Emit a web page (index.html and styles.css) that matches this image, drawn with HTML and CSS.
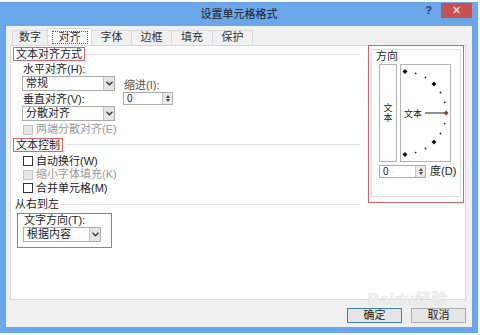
FILE: index.html
```html
<!DOCTYPE html>
<html>
<head>
    <title>设置单元格格式</title>
    <link rel="stylesheet" href="styles.css">
</head>
<body>
    <div class="window">
        <div class="titlebar">
            <div></div>
            <div class="title">设置单元格格式</div>
            <div class="controls">
                <span class="help">?</span>
                <span class="close">×</span>
            </div>
        </div>
        <div class="dialog-body">
            <div class="tabs">
                <div class="tab w36">数字</div>
                <div class="tab w44 active"><span class="focus">对齐</span></div>
                <div class="tab w40">字体</div>
                <div class="tab w40">边框</div>
                <div class="tab w41">填充</div>
                <div class="tab w40">保护</div>
            </div>
            <div class="panel">
                <div class="left">
                    <div class="heading">
                        <span class="mark">文本对齐方式</span>
                        <span class="rule"></span>
                    </div>
                    <div class="align-grid">
                        <div class="col-a">
                            <div class="label">水平对齐(<u>H</u>):</div>
                            <div class="select w93"><span>常规</span><span class="arrow"><svg width="7" height="5" viewBox="0 0 7 5"><path d="M0.5 0.8 L3.5 3.8 L6.5 0.8" fill="none" stroke="#333" stroke-width="1.3"/></svg></span></div>
                            <div class="label gap2">垂直对齐(<u>V</u>):</div>
                            <div class="select w93"><span>分散对齐</span><span class="arrow"><svg width="7" height="5" viewBox="0 0 7 5"><path d="M0.5 0.8 L3.5 3.8 L6.5 0.8" fill="none" stroke="#333" stroke-width="1.3"/></svg></span></div>
                        </div>
                        <div class="col-b">
                            <div class="label muted">缩进(<u>I</u>):</div>
                            <div class="spin w50"><span>0</span><span class="spin-btn"><i class="up"></i><i class="down"></i></span></div>
                        </div>
                    </div>
                    <div class="check disabled justify"><span class="box"></span><span>两端分散对齐(<u>E</u>)</span></div>

                    <div class="heading">
                        <span class="mark">文本控制</span>
                        <span class="rule"></span>
                    </div>
                    <div class="check first"><span class="box"></span><span>自动换行(<u>W</u>)</span></div>
                    <div class="check disabled"><span class="box"></span><span>缩小字体填充(<u>K</u>)</span></div>
                    <div class="check"><span class="box"></span><span>合并单元格(<u>M</u>)</span></div>

                    <div class="heading plain">
                        <span class="group-title">从右到左</span>
                        <span class="rule"></span>
                    </div>
                    <div class="direction">
                        <div class="label">文字方向(<u>T</u>):</div>
                        <div class="select w78"><span>根据内容</span><span class="arrow"><svg width="7" height="5" viewBox="0 0 7 5"><path d="M0.5 0.8 L3.5 3.8 L6.5 0.8" fill="none" stroke="#333" stroke-width="1.3"/></svg></span></div>
                    </div>
                </div>

                <div class="right">
                    <div class="orient">
                        <div class="orient-title">方向</div>
                        <div class="orient-boxes">
                            <div class="vtext"><span>文本</span></div>
                            <div class="dial">
                                <svg width="51" height="98" viewBox="0 0 51 98">
                                    <polygon points="5,5 7.5,7.5 5,10 2.5,7.5" fill="#111"/>
                                    <circle cx="15.6" cy="9.4" r="0.9" fill="#222"/>
                                    <circle cx="25.5" cy="13.5" r="0.9" fill="#222"/>
                                    <polygon points="34,17.5 36.5,20 34,22.5 31.5,20" fill="#111"/>
                                    <circle cx="40.5" cy="28.5" r="0.9" fill="#222"/>
                                    <circle cx="44.6" cy="38.4" r="0.9" fill="#222"/>
                                    <text x="4" y="52.5" font-size="9" font-family="Noto Sans CJK SC, sans-serif" fill="#222">文本</text>
                                    <line x1="25" y1="49" x2="44" y2="49" stroke="#222" stroke-width="1"/>
                                    <polygon points="46,46.5 48.5,49 46,51.5 43.5,49" fill="#b3282d"/>
                                    <circle cx="44.6" cy="59.6" r="0.9" fill="#222"/>
                                    <circle cx="40.5" cy="69.5" r="0.9" fill="#222"/>
                                    <polygon points="34,75.5 36.5,78 34,80.5 31.5,78" fill="#111"/>
                                    <circle cx="25.5" cy="84.5" r="0.9" fill="#222"/>
                                    <circle cx="15.6" cy="88.6" r="0.9" fill="#222"/>
                                    <polygon points="5,88 7.5,90.5 5,93 2.5,90.5" fill="#111"/>
                                </svg>
                            </div>
                        </div>
                        <div class="degree-row">
                            <div class="spin w47"><span>0</span><span class="spin-btn"><i class="up"></i><i class="down"></i></span></div>
                            <span class="degree">度(<u>D</u>)</span>
                        </div>
                    </div>
                </div>
            </div>
            <div class="buttons">
                <div class="btn default">确定</div>
                <div class="btn">取消</div>
            </div>
            <div class="watermark">Baidu经验</div>
        </div>
    </div>
</body>
</html>
```

FILE: styles.css
```css
* { margin: 0; padding: 0; box-sizing: border-box; }
body { background: #f6f8fa; font-family: "Liberation Sans", "Noto Sans CJK SC", sans-serif; font-size: 11px; line-height: 13px; color: #222; }
u { text-decoration: none; }

.window { width: 478px; height: 331px; margin-top: 2px; background: #6ba7e8; padding: 0 6px 6px 6px; }
.titlebar { height: 24px; display: grid; grid-template-columns: 70px 1fr 70px; }
.title { text-align: center; line-height: 24px; font-size: 11px; color: #1c1c1c; }
.controls { display: flex; justify-content: flex-end; align-items: flex-start; }
.help { font-weight: bold; font-size: 11px; color: #1f3f70; line-height: 16px; margin-right: 9px; }
.close { width: 31px; height: 15px; margin-top: 1px; background: #c75050; color: #fff; text-align: center; line-height: 14px; font-size: 14px; }

.dialog-body { position: relative; height: 301px; background: #f0f0f0; padding: 4px 6px 0 4px; }

.tabs { display: flex; height: 15px; padding-left: 2px; }
.tab { height: 15px; border: 1px solid #d9d9d9; border-bottom: none; margin-right: -1px; background: #f0f0f0; text-align: center; line-height: 13px; color: #333; }
.tab.active { height: 17px; margin-top: -2px; background: #fff; position: relative; z-index: 1; padding-top: 2px; }
.focus { border: 1px dotted #555; padding: 0 6px; line-height: 11px; display: inline-block; }
.w36 { width: 36px; } .w44 { width: 45px; } .w40 { width: 41px; } .w41 { width: 42px; }

.panel { display: flex; width: 456px; height: 255px; background: #fff; border: 1px solid #d9d9d9; padding: 0 1px 0 2px; }
.left { flex: 1; padding-top: 1px; }
.right { width: 96px; height: 158px; margin-left: 4px; margin-top: -1px; border: 1px solid #d6646c; padding: 3px 2px 0 2px; }

.heading { display: flex; align-items: center; }
.mark { border: 1px solid #d6646c; line-height: 12px; padding: 0 2px; }
.rule { flex: 1; height: 1px; background: #e4e4e4; margin-left: 2px; margin-right: 4px; }
.heading.plain { margin-top: 3px; padding-left: 2px; }
.group-title { line-height: 13px; }

.align-grid { display: flex; padding-left: 9px; margin-top: 2px; }
.col-a { width: 93px; }
.col-b { margin-left: 8px; padding-top: 16px; }
.label { line-height: 13px; padding-left: 1px; }
.label.gap2 { margin-top: 2px; }
.muted { color: #555; }

.select { display: flex; justify-content: space-between; align-items: stretch; height: 15px; border: 1px solid #acacac; background: #fff; padding-left: 3px; line-height: 13px; }
.arrow { width: 11px; background: #e5e5e5; border-left: 1px solid #c4c4c4; display: flex; align-items: center; justify-content: center; }
.w93 { width: 93px; } .w78 { width: 78px; } .w50 { width: 50px; } .w47 { width: 47px; }

.spin { display: flex; justify-content: space-between; height: 13px; border: 1px solid #acacac; background: #fff; padding-left: 3px; line-height: 11px; font-size: 10px; }
.spin-btn { width: 10px; background: #e8e8e8; border-left: 1px solid #c8c8c8; display: flex; flex-direction: column; align-items: center; justify-content: center; gap: 1px; }
.up { width: 0; height: 0; border-left: 2.5px solid transparent; border-right: 2.5px solid transparent; border-bottom: 3px solid #444; }
.down { width: 0; height: 0; border-left: 2.5px solid transparent; border-right: 2.5px solid transparent; border-top: 3px solid #444; }

.check { display: flex; align-items: center; height: 13.5px; line-height: 13px; padding-left: 10px; }
.check .box { width: 10px; height: 10px; border: 1px solid #333; background: #fff; margin-right: 3px; }
.check.disabled { color: #9a9a9a; }
.check.disabled .box { border-color: #c3c3c3; background: #e6e6e6; }
.check.justify { margin-top: 2px; margin-bottom: 1px; }
.check.first { margin-top: 3px; }

.direction { width: 95px; margin: 2px 0 0 4px; border: 1px solid #d6646c; padding: 0 0 5px 5px; }
.direction .label { padding-left: 1px; }

.orient { height: 148px; border: 1px solid #e0e0e0; padding-left: 7px; }
.orient-title { line-height: 12px; margin-left: -3px; }
.orient-boxes { display: flex; gap: 3px; margin-top: 2px; }
.vtext { width: 18px; height: 98px; border: 1px solid #b5b5b5; display: flex; align-items: center; justify-content: center; }
.vtext span { writing-mode: vertical-rl; font-family: "Noto Sans CJK SC", sans-serif; font-size: 9px; line-height: 9px; letter-spacing: 1px; }
.dial { width: 51px; height: 98px; border: 1px solid #b5b5b5; }
.dial svg { display: block; margin: -1px; }
.degree-row { display: flex; align-items: center; margin-top: 3px; }
.degree { margin-left: 4px; line-height: 13px; }

.buttons { display: flex; justify-content: flex-end; gap: 9px; margin-top: 8px; }
.btn { width: 55px; height: 15px; border: 1px solid #adadad; background: #e5e5e5; text-align: center; line-height: 13px; }
.btn.default { border-color: #3c7fb1; }

.watermark { position: absolute; left: 362px; top: 266px; font-weight: bold; font-size: 16px; line-height: 16px; color: rgba(255,255,255,0.75); text-shadow: 0 0 1px #bdbdbd; letter-spacing: 0.5px; }
```
